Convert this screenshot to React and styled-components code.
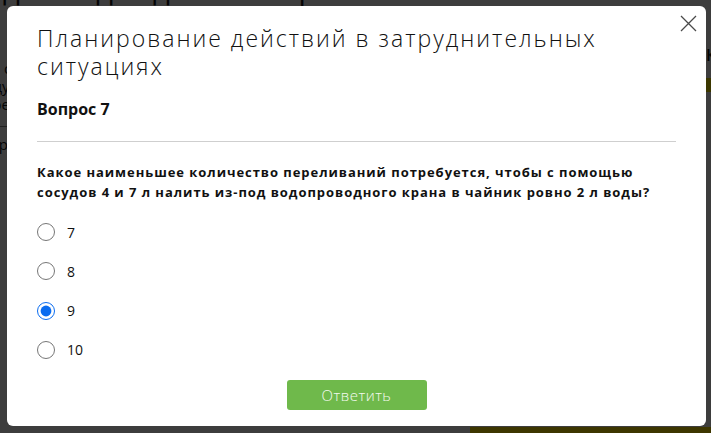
import { useState } from 'react'
import styled, { createGlobalStyle } from 'styled-components'

const GlobalStyle = createGlobalStyle`
  html, body {
    margin: 0;
    padding: 0;
    height: 100%;
    overflow: hidden;
  }
  body {
    font-family: "Open Sans", "Liberation Sans", sans-serif;
    color: #111;
    background: #fff;
  }
`;

const answers = ['7', '8', '9', '10'];

export default function App() {
	const [choice, setChoice] = useState('9');

	return (
		<>
			<GlobalStyle />
			<Page>
				<PageTitle>дания для детей и взрослых»</PageTitle>
				<PageBody>
					<SideMenu>
						<SideLink>Подробнее об</SideLink>
						<SideLink>Методы и ду</SideLink>
						<SideLink>Контроль ре</SideLink>
						<SideRule />
						<SideLink>Отчёт по р</SideLink>
					</SideMenu>
					<Aside>
						<AsideText>Курсу</AsideText>
						<AsideButton />
					</Aside>
				</PageBody>
				<FooterBar />
			</Page>

			<Overlay>
				<Modal>
					<CloseButton aria-label="Закрыть">
						<svg width="17" height="17" viewBox="0 0 17 17">
							<path d="M1 1 L16 16 M16 1 L1 16" stroke="#4a4a4a" strokeWidth="1.3" fill="none" />
						</svg>
					</CloseButton>
					<Title>Планирование действий в затруднительных ситуациях</Title>
					<QuestionNo>Вопрос 7</QuestionNo>
					<Divider />
					<Question>
						Какое наименьшее количество переливаний потребуется, чтобы с помощью
						сосудов 4 и 7 л налить из-под водопроводного крана в чайник ровно 2 л воды?
					</Question>
					<Options>
						{answers.map((a) => (
							<Option key={a}>
								<Radio
									type="radio"
									name="answer"
									checked={choice === a}
									onChange={() => setChoice(a)}
								/>
								<OptionText>{a}</OptionText>
							</Option>
						))}
					</Options>
					<Footer>
						<SubmitButton>Ответить</SubmitButton>
					</Footer>
				</Modal>
			</Overlay>
		</>
	)
}

const Page = styled.div`
  height: 433px;
  overflow: hidden;
  display: flex;
  flex-direction: column;
`;

const PageTitle = styled.h1`
  margin: -28px 0 0 3px;
  font-size: 29px;
  font-weight: 400;
  line-height: 34px;
  white-space: nowrap;
`;

const PageBody = styled.div`
  flex: 1;
  display: flex;
  justify-content: space-between;
  padding-top: 54px;
`;

const SideMenu = styled.div`
  margin-left: -82px;
  display: flex;
  flex-direction: column;
  gap: 1px;
  width: 90px;
`;

const SideLink = styled.div`
  font-size: 15px;
  line-height: 17px;
  white-space: nowrap;
  text-align: right;
`;

const SideRule = styled.div`
  height: 1px;
  background: #888;
  margin: 12px 0 8px;
`;

const Aside = styled.div`
  margin-top: -16px;
  margin-right: -60px;
  width: 65px;
  display: flex;
  flex-direction: column;
  gap: 12px;
`;

const AsideText = styled.div`
  font-size: 16px;
  font-weight: 600;
`;

const AsideButton = styled.div`
  height: 14px;
  background: #f5e400;
`;

const FooterBar = styled.div`
  height: 6px;
  margin-left: 470px;
  background: #ffe000;
`;

const Overlay = styled.div`
  position: fixed;
  inset: 0;
  background: rgba(0, 0, 0, 0.76);
  display: flex;
  align-items: flex-start;
  padding: 6px 5px 0 7px;
`;

const Modal = styled.div`
  position: relative;
  flex: 1;
  height: 420px;
  box-sizing: border-box;
  background: #fff;
  border-radius: 6px;
  padding: 18px 30px 0;
  display: flex;
  flex-direction: column;
`;

const CloseButton = styled.button`
  position: absolute;
  top: 9px;
  right: 9px;
  width: 17px;
  height: 17px;
  padding: 0;
  border: 0;
  background: none;
  cursor: pointer;
  display: flex;
`;

const Title = styled.h2`
  margin: 0;
  max-width: 620px;
  font-size: 23px;
  font-weight: 300;
  line-height: 28px;
  letter-spacing: 2px;
  color: #111;
`;

const QuestionNo = styled.h3`
  margin: 18px 0 0;
  font-size: 16px;
  font-weight: 700;
  line-height: 22px;
`;

const Divider = styled.hr`
  margin: 21px 0 0;
  border: 0;
  border-top: 1px solid #cfcfcf;
`;

const Question = styled.p`
  margin: 20px 0 0;
  font-size: 13px;
  font-weight: 700;
  line-height: 20px;
  letter-spacing: 0.95px;
  color: #111;
`;

const Options = styled.div`
  margin-top: 18px;
  display: flex;
  flex-direction: column;
  gap: 15.3px;
`;

const Option = styled.label`
  display: flex;
  align-items: center;
  gap: 12px;
  height: 24px;
  cursor: pointer;
`;

const Radio = styled.input`
  margin: 0;
  width: 18px;
  height: 18px;
  accent-color: #0a6cf0;
`;

const OptionText = styled.span`
  font-size: 14px;
  color: #111;
`;

const Footer = styled.div`
  margin-top: 18px;
  display: flex;
  justify-content: center;
`;

const SubmitButton = styled.button`
  width: 140px;
  height: 30px;
  border: 0;
  border-radius: 3px;
  background: #6fb94b;
  color: #f4faef;
  font-family: "Open Sans", sans-serif;
  font-size: 15px;
  font-weight: 300;
  letter-spacing: 0.5px;
  cursor: pointer;
`;
